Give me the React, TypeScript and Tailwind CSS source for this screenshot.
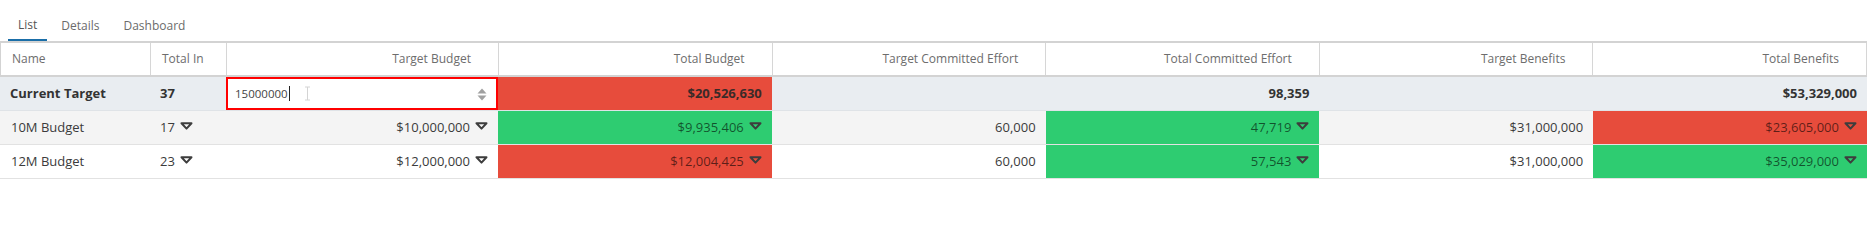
import React from 'react';

const font = { fontFamily: '"Open Sans", "Noto Sans", sans-serif' };

const Caret = () => (
  <svg width="13" height="8" viewBox="0 0 13 8" className="ml-[5px] shrink-0 -translate-y-[2px]">
    <path d="M1.5 1.2 L11.5 1.2 L6.5 6.6 Z" fill="none" stroke="#3d3d3d" strokeWidth="2" strokeLinejoin="round" />
  </svg>
);

type Cell = { text?: string; caret?: boolean; bg?: string };

const headers = [
  'Name',
  'Total In',
  'Target Budget',
  'Total Budget',
  'Target Committed Effort',
  'Total Committed Effort',
  'Target Benefits',
  'Total Benefits',
];

const rows: { name: string; bg: string; cells: Cell[] }[] = [
  {
    name: '10M Budget',
    bg: 'bg-[#f4f4f4]',
    cells: [
      { text: '17', caret: true },
      { text: '$10,000,000', caret: true },
      { text: '$9,935,406', caret: true, bg: 'bg-[#2ecc71]' },
      { text: '60,000' },
      { text: '47,719', caret: true, bg: 'bg-[#2ecc71]' },
      { text: '$31,000,000' },
      { text: '$23,605,000', caret: true, bg: 'bg-[#e74c3c]' },
    ],
  },
  {
    name: '12M Budget',
    bg: 'bg-white',
    cells: [
      { text: '23', caret: true },
      { text: '$12,000,000', caret: true },
      { text: '$12,004,425', caret: true, bg: 'bg-[#e74c3c]' },
      { text: '60,000' },
      { text: '57,543', caret: true, bg: 'bg-[#2ecc71]' },
      { text: '$31,000,000' },
      { text: '$35,029,000', caret: true, bg: 'bg-[#2ecc71]' },
    ],
  },
];

const grid = 'grid grid-cols-[150px_76px_272px_repeat(5,1fr)]';

export default function App() {
  return (
    <div className="w-[1867px] h-[240px] bg-white text-[#333]" style={font}>
      {/* tabs */}
      <div className="flex h-[41px] items-end gap-1 pl-2 text-[12px] text-[#6b6b6b]">
        <div className="flex h-[30px] items-center border-b-2 border-[#1a6ea8] px-2.5 pb-[1px] text-[#555]">List</div>
        <div className="flex h-[30px] items-center px-2.5 pb-[1px]">Details</div>
        <div className="flex h-[30px] items-center px-2.5 pb-[1px]">Dashboard</div>
      </div>

      {/* header */}
      <div className={`${grid} h-[36px] border-y-2 border-[#d3d3d3] border-l border-l-[#d3d3d3] text-[12px] text-[#6d6d6d]`}>
        {headers.map((h, i) => (
          <div
            key={h}
            className={`flex items-center border-r border-[#d6d6d6] ${i < 2 ? 'justify-start pl-[11px]' : 'justify-end pr-[27px]'}`}
          >
            {h}
          </div>
        ))}
      </div>

      {/* current target row */}
      <div className={`${grid} h-[34px] border-b border-[#dfe3e7] bg-[#e9edf1] text-[13px] font-bold text-[#333]`}>
        <div className="flex items-center pl-[10px]">Current Target</div>
        <div className="flex items-center pl-[10px]">37</div>
        <div className="relative flex items-center border-2 border-[#ff0000] bg-white pl-[7px] text-[11.5px] font-normal text-[#444]">
          <span>15000000</span>
          <span className="ml-[1px] h-[15px] w-px bg-[#222]" />
          <svg width="7" height="15" viewBox="0 0 7 15" className="ml-[14px]">
            <path d="M1 1 H6 M3.5 1 V14 M1 14 H6" stroke="#d4d4d4" strokeWidth="1" fill="none" />
          </svg>
          <svg width="10" height="13" viewBox="0 0 10 13" className="absolute right-[9px] top-[9px]">
            <path d="M5 0.5 L9.5 5.5 L0.5 5.5 Z" fill="#a0a0a0" />
            <path d="M0.5 7.5 L9.5 7.5 L5 12.5 Z" fill="#a0a0a0" />
          </svg>
        </div>
        <div className="flex items-center justify-end bg-[#e74c3c] pr-[10px] text-[#3a2a28]">$20,526,630</div>
        <div />
        <div className="flex items-center justify-end pr-[10px]">98,359</div>
        <div />
        <div className="flex items-center justify-end pr-[10px]">$53,329,000</div>
      </div>

      {/* data rows */}
      {rows.map((r) => (
        <div key={r.name} className={`${grid} h-[34px] border-b border-[#e2e2e2] ${r.bg} text-[13px] text-[#3b3b3b]`}>
          <div className="flex items-center pl-[11px]">{r.name}</div>
          {r.cells.map((c, i) => (
            <div
              key={i}
              className={`flex items-center ${i === 0 ? 'justify-start pl-[10px]' : 'justify-end pr-[10px]'} ${c.bg ?? ''} ${c.bg ? 'text-black/60' : ''}`}
            >
              <span>{c.text}</span>
              {c.caret && <Caret />}
            </div>
          ))}
        </div>
      ))}
    </div>
  );
}
